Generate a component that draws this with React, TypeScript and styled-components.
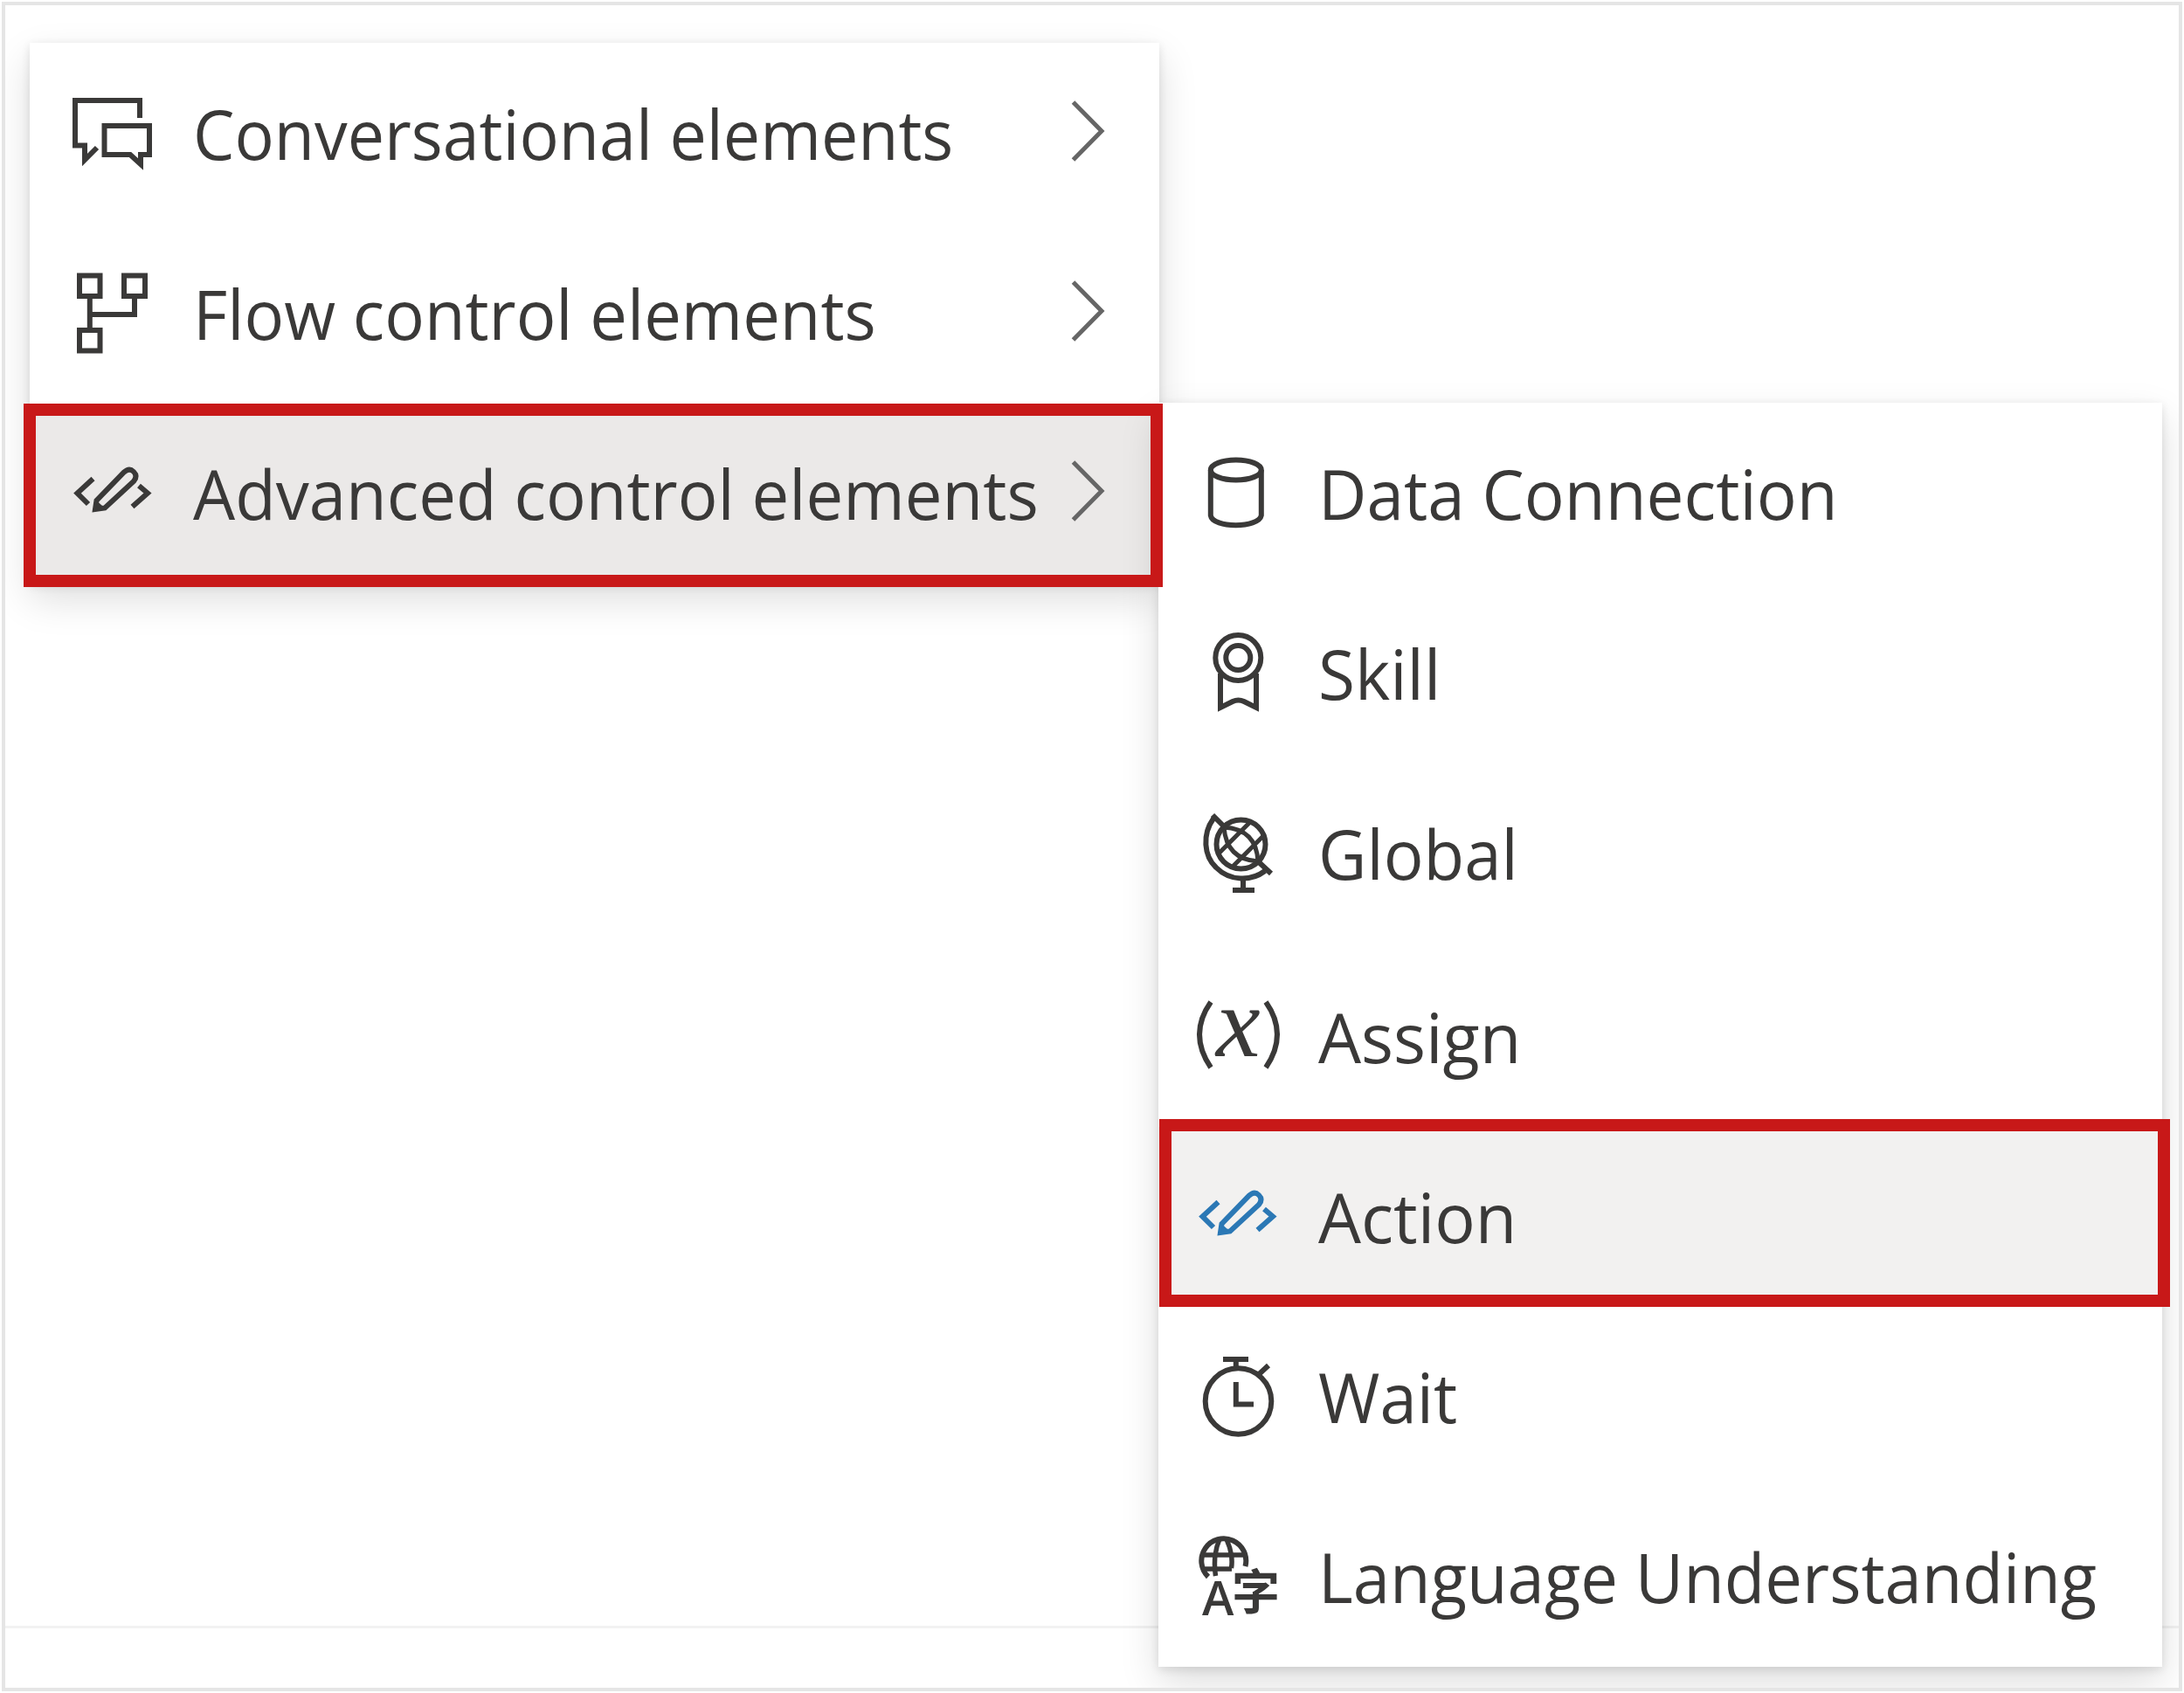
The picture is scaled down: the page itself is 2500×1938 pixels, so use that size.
import React from "react";
import styled, { createGlobalStyle } from "styled-components";

const ink = "#3a3938";

const GlobalStyle = createGlobalStyle`
  *, *::before, *::after { box-sizing: border-box; }
  html, body { margin: 0; padding: 0; background: #fff; }
`;

const Page = styled.div`
  width: 2500px;
  height: 1938px;
  padding: 2px;
  background: #fff;
  font-family: "Open Sans", "Noto Sans", sans-serif;
  color: ${ink};
`;

const Frame = styled.main`
  position: relative;
  display: flex;
  flex-direction: column;
  width: 2496px;
  height: 1934px;
  border: 4px solid #e5e5e5;
  overflow: hidden;
`;

const Canvas = styled.section`
  flex: 1;
`;

const Footer = styled.footer`
  height: 71px;
  border-top: 3px solid #f2f2f2;
`;

const MenuLayer = styled.div`
  position: absolute;
  inset: 0;
  display: flex;
  align-items: flex-start;
  padding: 43px 0 0 28px;
`;

const Menu = styled.ul<{ $width: number; $sub?: boolean }>`
  position: relative;
  z-index: ${(p) => (p.$sub ? 1 : "auto")};
  flex: none;
  width: ${(p) => p.$width}px;
  margin: ${(p) => (p.$sub ? "412px 0 0 -1px" : "0")};
  padding: 1px 0 0;
  list-style: none;
  background: #fff;
  box-shadow: 0 18px 42px rgba(0, 0, 0, 0.132), 0 3px 10px rgba(0, 0, 0, 0.108);
`;

const Item = styled.li<{ $fill?: string; $gap?: number }>`
  position: relative;
  display: flex;
  align-items: center;
  height: 206px;
  margin-top: ${(p) => p.$gap ?? 0}px;
  background: ${(p) => p.$fill ?? "transparent"};
`;

const IconBox = styled.svg<{ $left: number; $color?: string }>`
  flex: none;
  width: 110px;
  height: 120px;
  margin-left: ${(p) => p.$left}px;
  overflow: visible;
  color: ${(p) => p.$color ?? ink};
  fill: none;
  stroke: currentColor;
  stroke-width: 6;
`;

const Label = styled.span<{ $scale: number }>`
  flex: 1;
  min-width: 0;
  margin-left: 37px;
  font-size: 79px;
  line-height: 206px;
  white-space: nowrap;
  transform: scaleX(${(p) => p.$scale});
  transform-origin: left center;
`;

const Arrow = styled.svg`
  flex: none;
  width: 50px;
  height: 80px;
  margin: 0 57px 6px 0;
  fill: none;
  stroke: #666;
  stroke-width: 5;
`;

const Highlight = styled.div<{ $inset: string }>`
  position: absolute;
  z-index: 3;
  inset: ${(p) => p.$inset};
  border: 14px solid #c81818;
  pointer-events: none;
`;

const Serif = styled.text`
  font-family: "Liberation Serif", serif;
  font-style: italic;
  font-size: 114px;
  fill: currentColor;
  stroke: none;
`;

const Glyph = styled.text<{ $size: number }>`
  font-family: "Open Sans", "Noto Sans CJK SC", sans-serif;
  font-size: ${(p) => p.$size}px;
  font-weight: 600;
  fill: currentColor;
  stroke: none;
`;

type IconProps = { left: number; color?: string };

const ChatIcon = ({ left }: IconProps) => (
  <IconBox $left={left} viewBox="74 93 110 120">
    <path d="M160 135V115H86V166.500H97V183L111 169" />
    <path d="M119.500 144H171V177H161V188L149 177H119.500Z" />
  </IconBox>
);

const FlowIcon = ({ left }: IconProps) => (
  <IconBox $left={left} viewBox="74 299 110 120">
    <path d="M91 315.500H114.500V339H91ZM142 315.500H166V339H142ZM91 378H114.500V401.500H91ZM102.800 339V378M102.800 360H154V339" />
  </IconBox>
);

const CodeIcon = ({ left, color }: IconProps) => (
  <IconBox $left={left} $color={color} viewBox="74 505 110 120">
    <path d="M106.500 548L88.500 564.500L101 577M159 556L169 564.500L151.500 580" />
    <path d="M109 583L110.500 573L142 540.500Q148 535 153 540Q158 545 153 551L120 581.500Z" />
    <path d="M109 583L110 574L119 582Z" fill="currentColor" strokeWidth="2" />
  </IconBox>
);

const DataIcon = ({ left }: IconProps) => (
  <IconBox $left={left} viewBox="1362 505 110 120">
    <ellipse cx="1414.800" cy="538" rx="29" ry="11.500" />
    <path d="M1385.800 538V590C1388 605 1441 605 1443.800 590V538" />
  </IconBox>
);

const SkillIcon = ({ left }: IconProps) => (
  <IconBox $left={left} viewBox="1362 711 110 120">
    <circle cx="1417.300" cy="753" r="26" />
    <circle cx="1417.300" cy="753" r="14" />
    <path d="M1397 771V810L1411 803Q1417.500 800 1424 803L1438 810V771" />
  </IconBox>
);

const GlobeIcon = ({ left }: IconProps) => (
  <IconBox $left={left} viewBox="1362 917 110 120">
    <circle cx="1420.500" cy="966.500" r="28" />
    <path d="M1388 933L1401 946M1440 986L1455 1000" />
    <path d="M1389 937C1376 955 1378 980 1392 993C1408 1009 1432 1009 1448 997" />
    <path
      d="M1395 977L1431 941M1411 992L1447 956M1401 947Q1438 949 1440 986M1401 947Q1404 984 1440 986"
      strokeWidth="5"
    />
    <path d="M1423 1005V1019M1411 1019H1436" />
  </IconBox>
);

const VariableIcon = ({ left }: IconProps) => (
  <IconBox $left={left} viewBox="1362 1127 110 120">
    <path d="M1386 1147Q1360 1184 1386 1222M1449 1147Q1475 1184 1449 1222" />
    <Serif x="1392" y="1209">x</Serif>
  </IconBox>
);

const TimerIcon = ({ left }: IconProps) => (
  <IconBox $left={left} viewBox="1362 1539 110 120">
    <circle cx="1417.500" cy="1604" r="37.800" />
    <path d="M1400 1556H1429M1414.800 1556V1567M1439 1575L1452 1563M1414.800 1582V1607.500H1435" />
  </IconBox>
);

const LanguageIcon = ({ left }: IconProps) => (
  <IconBox $left={left} viewBox="1362 1745 110 120">
    <path d="M1383 1805A25.500 25.500 0 1 1 1425.500 1793" />
    <path
      d="M1377 1780H1424M1377 1796H1410M1391.500 1804Q1388 1780 1396 1762M1409.500 1795Q1412 1780 1404 1762"
      strokeWidth="5.500"
    />
    <Glyph x="1376" y="1849" $size={55}>A</Glyph>
    <Glyph x="1410" y="1842" $size={55}>字</Glyph>
  </IconBox>
);

const ArrowIcon = () => (
  <Arrow viewBox="0 0 50 80">
    <path d="M8.500 7L41 40L8.500 73" />
  </Arrow>
);

const mainItems = [
  { label: "Conversational elements", Icon: ChatIcon, scale: 0.954 },
  { label: "Flow control elements", Icon: FlowIcon, scale: 0.962 },
  { label: "Advanced control elements", Icon: CodeIcon, scale: 0.964, active: true },
];

const subItems = [
  { label: "Data Connection", Icon: DataIcon, scale: 0.968 },
  { label: "Skill", Icon: SkillIcon, scale: 0.97 },
  { label: "Global", Icon: GlobeIcon, scale: 0.965 },
  { label: "Assign", Icon: VariableIcon, scale: 0.982, gap: 4 },
  { label: "Action", Icon: CodeIcon, scale: 0.98, active: true },
  { label: "Wait", Icon: TimerIcon, scale: 0.965 },
  { label: "Language Understanding", Icon: LanguageIcon, scale: 0.963 },
];

export default function App() {
  return (
    <Page>
      <GlobalStyle />
      <Frame>
        <Canvas />
        <Footer />
        <MenuLayer>
          <Menu $width={1293}>
            {mainItems.map(({ label, Icon, scale, active }) => (
              <Item key={label} $fill={active ? "#ebe9e8" : undefined}>
                <Icon left={40} />
                <Label $scale={scale}>{label}</Label>
                <ArrowIcon />
                {active && <Highlight $inset="0 -4px -4px -7px" />}
              </Item>
            ))}
          </Menu>
          <Menu $width={1149} $sub>
            {subItems.map(({ label, Icon, scale, active, gap }) => (
              <Item key={label} $gap={gap} $fill={active ? "#f2f1f0" : undefined}>
                <Icon left={36} color={active ? "#2b78b5" : undefined} />
                <Label $scale={scale}>{label}</Label>
                {active && <Highlight $inset="-9px -9px 0 1px" />}
              </Item>
            ))}
          </Menu>
        </MenuLayer>
      </Frame>
    </Page>
  );
}
